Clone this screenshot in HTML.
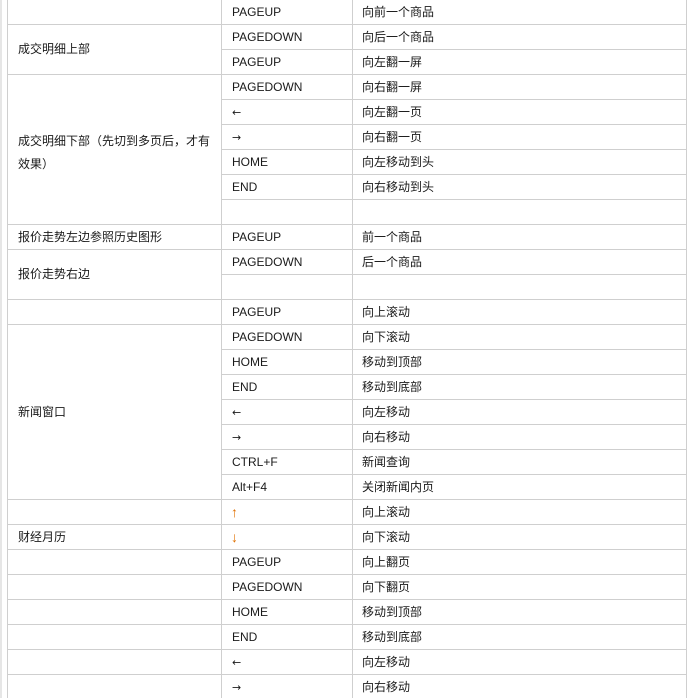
<!DOCTYPE html><html><head><meta charset="utf-8"><style>
body{margin:0;width:687px;height:698px;overflow:hidden;background:#fff;position:relative;font-family:"Liberation Sans","Noto Sans CJK SC",sans-serif;font-size:12px;color:#1a1a1a}
.h{position:absolute;height:1px;background:#cfcfcf}
.v{position:absolute;width:1px;background:#cfcfcf}
.t{position:absolute;line-height:14px;white-space:nowrap}
.o{color:#e07000;font-size:14px}
.a{font-family:"DejaVu Sans",sans-serif;font-size:11px}
</style></head><body>
<div style="position:absolute;left:0;top:0;width:2px;height:698px;background:#e6e6e6"></div>
<div class="v" style="left:7px;top:0;height:698px"></div>
<div class="v" style="left:221px;top:0;height:698px"></div>
<div class="v" style="left:352px;top:0;height:698px"></div>
<div class="v" style="left:686px;top:0;height:698px"></div>
<div class="h" style="left:7px;width:680px;top:24px"></div>
<div class="h" style="left:7px;width:680px;top:74px"></div>
<div class="h" style="left:7px;width:680px;top:224px"></div>
<div class="h" style="left:7px;width:680px;top:249px"></div>
<div class="h" style="left:7px;width:680px;top:299px"></div>
<div class="h" style="left:7px;width:680px;top:324px"></div>
<div class="h" style="left:7px;width:680px;top:499px"></div>
<div class="h" style="left:7px;width:680px;top:524px"></div>
<div class="h" style="left:7px;width:680px;top:549px"></div>
<div class="h" style="left:7px;width:680px;top:574px"></div>
<div class="h" style="left:7px;width:680px;top:599px"></div>
<div class="h" style="left:7px;width:680px;top:624px"></div>
<div class="h" style="left:7px;width:680px;top:649px"></div>
<div class="h" style="left:7px;width:680px;top:674px"></div>
<div class="h" style="left:221px;width:466px;top:49px"></div>
<div class="h" style="left:221px;width:466px;top:99px"></div>
<div class="h" style="left:221px;width:466px;top:124px"></div>
<div class="h" style="left:221px;width:466px;top:149px"></div>
<div class="h" style="left:221px;width:466px;top:174px"></div>
<div class="h" style="left:221px;width:466px;top:199px"></div>
<div class="h" style="left:221px;width:466px;top:274px"></div>
<div class="h" style="left:221px;width:466px;top:349px"></div>
<div class="h" style="left:221px;width:466px;top:374px"></div>
<div class="h" style="left:221px;width:466px;top:399px"></div>
<div class="h" style="left:221px;width:466px;top:424px"></div>
<div class="h" style="left:221px;width:466px;top:449px"></div>
<div class="h" style="left:221px;width:466px;top:474px"></div>
<div class="t" style="left:18px;top:42px">成交明细上部</div>
<div class="t" style="left:18px;top:130px;line-height:23px;white-space:normal;width:200px">成交明细下部（先切到多页后，才有效果）</div>
<div class="t" style="left:18px;top:230px">报价走势左边参照历史图形</div>
<div class="t" style="left:18px;top:267px">报价走势右边</div>
<div class="t" style="left:18px;top:405px">新闻窗口</div>
<div class="t" style="left:18px;top:530px">财经月历</div>
<div class="t" style="left:232px;top:5px">PAGEUP</div>
<div class="t" style="left:232px;top:30px">PAGEDOWN</div>
<div class="t" style="left:232px;top:55px">PAGEUP</div>
<div class="t" style="left:232px;top:80px">PAGEDOWN</div>
<div class="t a" style="left:232px;top:106px">←</div>
<div class="t a" style="left:232px;top:131px">→</div>
<div class="t" style="left:232px;top:155px">HOME</div>
<div class="t" style="left:232px;top:180px">END</div>
<div class="t" style="left:232px;top:230px">PAGEUP</div>
<div class="t" style="left:232px;top:255px">PAGEDOWN</div>
<div class="t" style="left:232px;top:305px">PAGEUP</div>
<div class="t" style="left:232px;top:330px">PAGEDOWN</div>
<div class="t" style="left:232px;top:355px">HOME</div>
<div class="t" style="left:232px;top:380px">END</div>
<div class="t a" style="left:232px;top:406px">←</div>
<div class="t a" style="left:232px;top:431px">→</div>
<div class="t" style="left:232px;top:455px">CTRL+F</div>
<div class="t" style="left:232px;top:480px">Alt+F4</div>
<div class="t o" style="left:231px;top:505px">↑</div>
<div class="t o" style="left:231px;top:530px">↓</div>
<div class="t" style="left:232px;top:555px">PAGEUP</div>
<div class="t" style="left:232px;top:580px">PAGEDOWN</div>
<div class="t" style="left:232px;top:605px">HOME</div>
<div class="t" style="left:232px;top:630px">END</div>
<div class="t a" style="left:232px;top:656px">←</div>
<div class="t a" style="left:232px;top:681px">→</div>
<div class="t" style="left:362px;top:5px">向前一个商品</div>
<div class="t" style="left:362px;top:30px">向后一个商品</div>
<div class="t" style="left:362px;top:55px">向左翻一屏</div>
<div class="t" style="left:362px;top:80px">向右翻一屏</div>
<div class="t" style="left:362px;top:105px">向左翻一页</div>
<div class="t" style="left:362px;top:130px">向右翻一页</div>
<div class="t" style="left:362px;top:155px">向左移动到头</div>
<div class="t" style="left:362px;top:180px">向右移动到头</div>
<div class="t" style="left:362px;top:230px">前一个商品</div>
<div class="t" style="left:362px;top:255px">后一个商品</div>
<div class="t" style="left:362px;top:305px">向上滚动</div>
<div class="t" style="left:362px;top:330px">向下滚动</div>
<div class="t" style="left:362px;top:355px">移动到顶部</div>
<div class="t" style="left:362px;top:380px">移动到底部</div>
<div class="t" style="left:362px;top:405px">向左移动</div>
<div class="t" style="left:362px;top:430px">向右移动</div>
<div class="t" style="left:362px;top:455px">新闻查询</div>
<div class="t" style="left:362px;top:480px">关闭新闻内页</div>
<div class="t" style="left:362px;top:505px">向上滚动</div>
<div class="t" style="left:362px;top:530px">向下滚动</div>
<div class="t" style="left:362px;top:555px">向上翻页</div>
<div class="t" style="left:362px;top:580px">向下翻页</div>
<div class="t" style="left:362px;top:605px">移动到顶部</div>
<div class="t" style="left:362px;top:630px">移动到底部</div>
<div class="t" style="left:362px;top:655px">向左移动</div>
<div class="t" style="left:362px;top:680px">向右移动</div>
</body></html>
